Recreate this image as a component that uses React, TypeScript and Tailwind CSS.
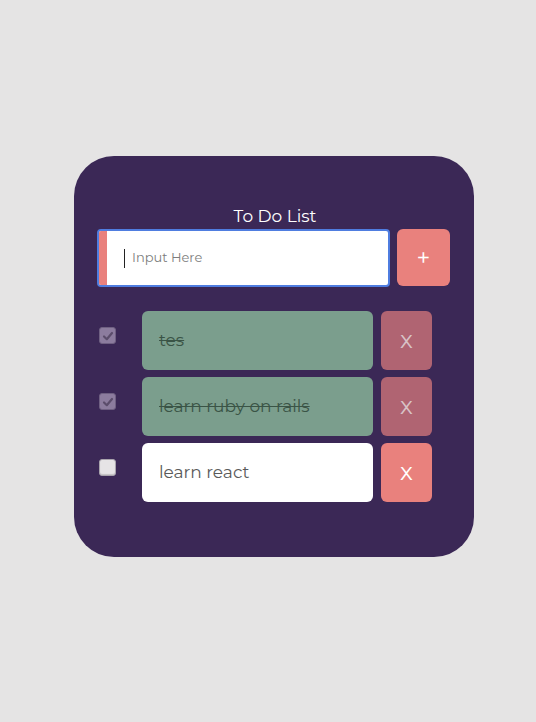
import React from "react";

const font = { fontFamily: "Montserrat, Inter, 'Noto Sans', sans-serif" };

function Check({ checked }: { checked: boolean }) {
  if (checked) {
    return (
      <div className="w-[17px] h-[17px] rounded-[3px] bg-[#8c7c9e] border border-[#6f6082] flex items-center justify-center">
        <svg width="12" height="12" viewBox="0 0 12 12">
          <path d="M2 6.5 L4.8 9.2 L10 3" fill="none" stroke="#5b4d6b" strokeWidth="2.2" strokeLinecap="round" strokeLinejoin="round" />
        </svg>
      </div>
    );
  }
  return <div className="w-[17px] h-[17px] rounded-[3px] bg-[#e6e4e6] border border-[#a9a4ad] shadow-[inset_0_-1px_1px_rgba(0,0,0,0.15)]" />;
}

function Row({ text, done }: { text: string; done: boolean }) {
  return (
    <div className="flex items-center h-[59px]">
      <div className="w-[45px] pl-[2px] flex items-center -mt-[10px]">
        <Check checked={done} />
      </div>
      <div
        className={`w-[231px] h-full rounded-[6px] flex items-center pl-[17px] text-[17px] ${
          done ? "bg-[#7b9e8d] text-[#3a5446] line-through" : "bg-white text-[#5a5a5a]"
        }`}
      >
        {text}
      </div>
      <div
        className={`ml-[8px] w-[51px] h-full rounded-[6px] flex items-center justify-center text-[24px] pb-[2px] ${
          done ? "bg-[#b06472] text-[#d8c2c6]" : "bg-[#e9817d] text-white"
        }`}
      >
        x
      </div>
    </div>
  );
}

export default function App() {
  return (
    <div className="w-[536px] h-[722px] bg-[#e5e4e4] pt-[156px]" style={font}>
      <div className="ml-[74px] w-[400px] h-[401px] rounded-[40px] bg-[#3b2856] pt-[47px] px-[23px]">
        <div className="text-center text-white text-[17px] leading-[26px] pl-[2px]">To Do List</div>
        <div className="flex gap-[7px]">
          <div className="w-[293px] h-[58px] rounded-[4px] border-2 border-[#4f7de0] bg-white flex items-center overflow-hidden">
            <div className="w-[8px] h-full bg-[#e9817d]" />
            <div className="ml-[17px] w-[1px] h-[19px] bg-[#222]" />
            <span className="ml-[7px] text-[13px] text-[#7d7d7d]">Input Here</span>
          </div>
          <div className="w-[53px] h-[57px] rounded-[6px] bg-[#e9817d] flex items-center justify-center text-white text-[24px]">
            +
          </div>
        </div>
        <div className="mt-[24px] flex flex-col gap-[7px]">
          <Row text="tes" done />
          <Row text="learn ruby on rails" done />
          <Row text="learn react" done={false} />
        </div>
      </div>
    </div>
  );
}
